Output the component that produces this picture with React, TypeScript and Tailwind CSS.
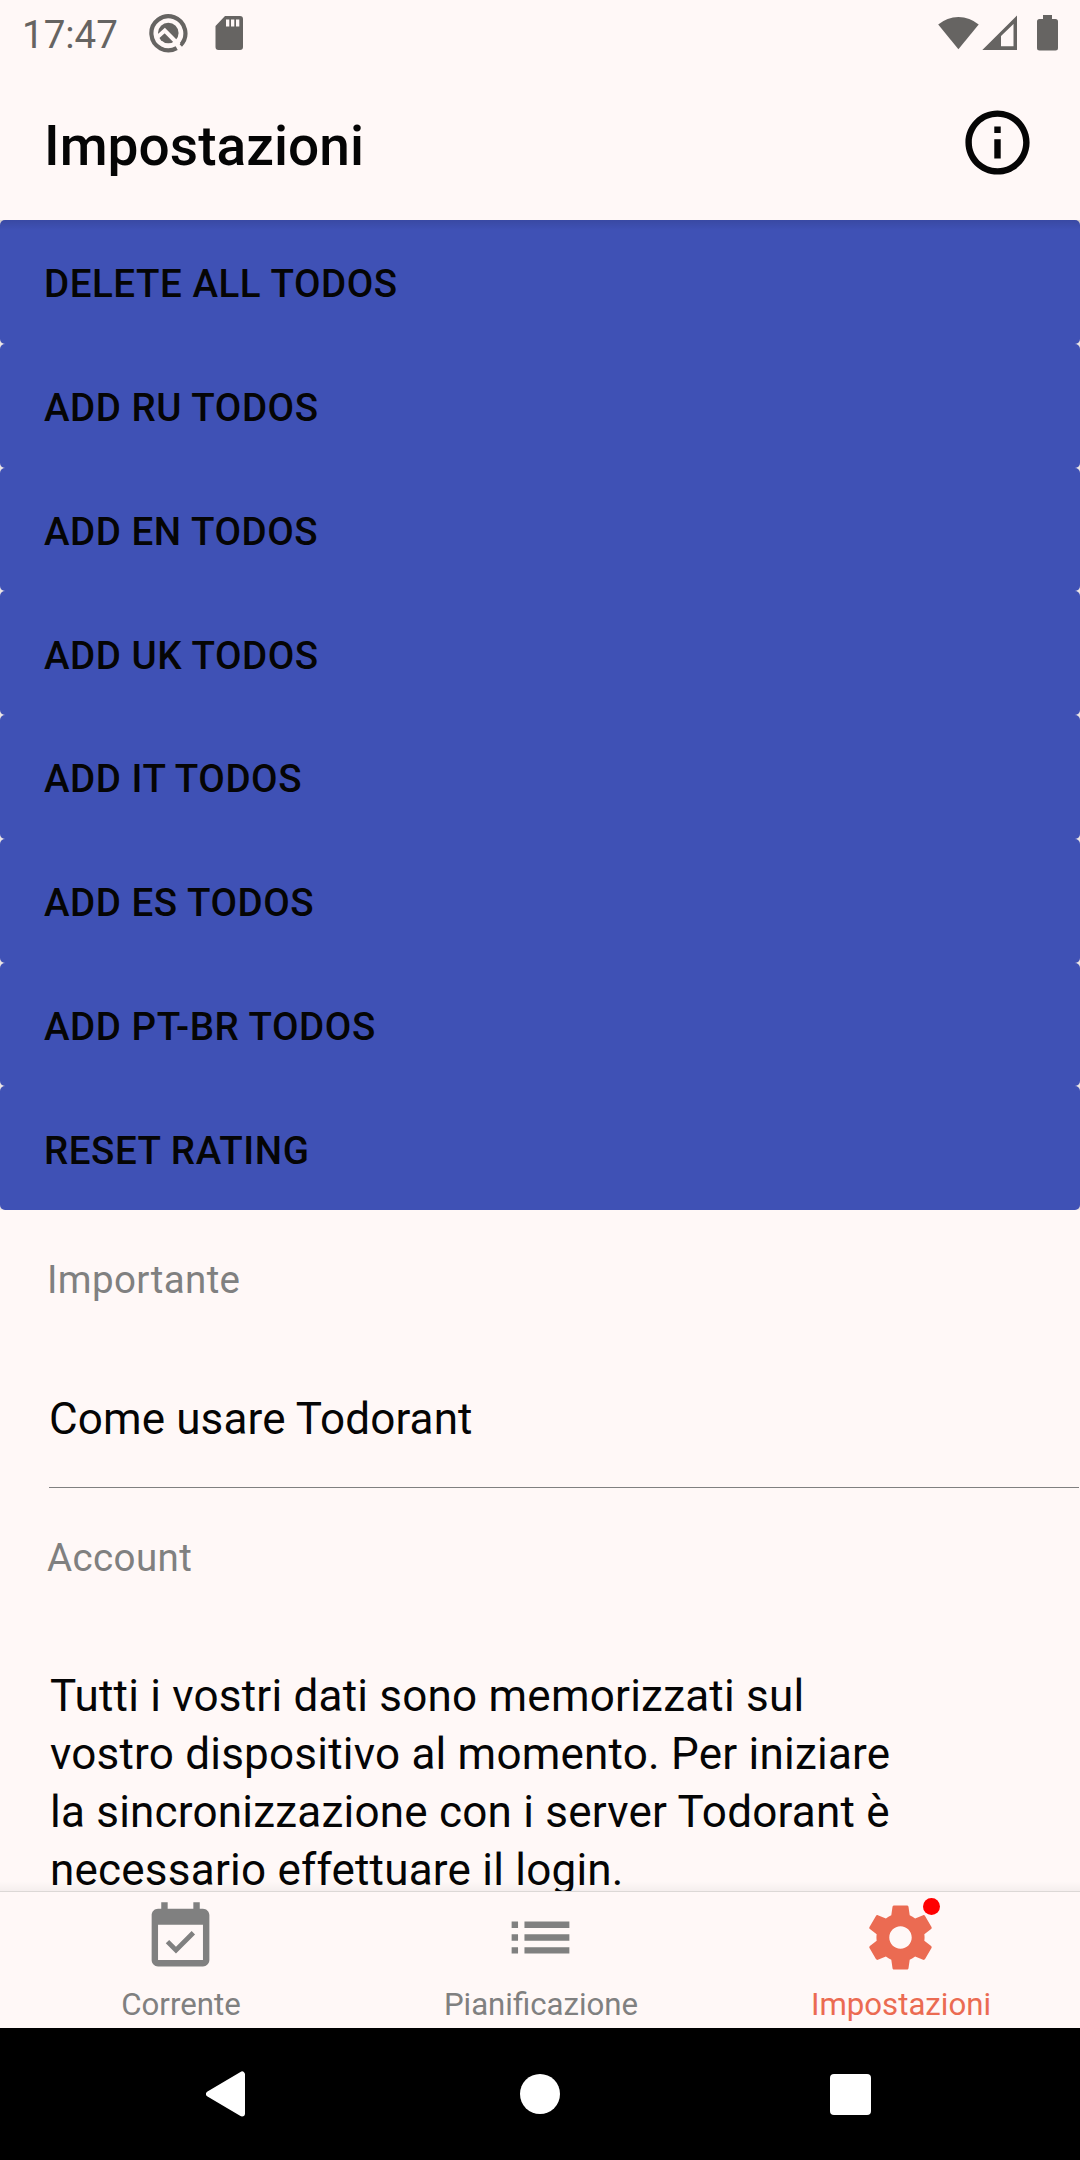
type NavTab = { label: string; path: string; active?: boolean };

const actions = [
  "DELETE ALL TODOS",
  "ADD RU TODOS",
  "ADD EN TODOS",
  "ADD UK TODOS",
  "ADD IT TODOS",
  "ADD ES TODOS",
  "ADD PT-BR TODOS",
  "RESET RATING",
];

const tabs: NavTab[] = [
  {
    label: "Corrente",
    path: "M16.53 11.06L15.47 10l-4.88 4.88-2.12-2.12-1.06 1.06L10.59 17l5.94-5.94zM19 3h-1V1h-2v2H8V1H6v2H5c-1.11 0-1.99.9-1.99 2L3 19c0 1.1.89 2 2 2h14c1.1 0 2-.9 2-2V5c0-1.1-.9-2-2-2zm0 16H5V8h14v11z",
  },
  {
    label: "Pianificazione",
    path: "M3 13h2v-2H3v2zm0 4h2v-2H3v2zm0-8h2V7H3v2zm4 4h14v-2H7v2zm0 4h14v-2H7v2zM7 7v2h14V7H7z",
  },
  {
    label: "Impostazioni",
    active: true,
    path: "M19.43 12.98c.04-.32.07-.64.07-.98s-.03-.66-.07-.98l2.11-1.65c.19-.15.24-.42.12-.64l-2-3.46c-.12-.22-.39-.3-.61-.22l-2.49 1c-.52-.4-1.08-.73-1.69-.98l-.38-2.65C14.46 2.18 14.25 2 14 2h-4c-.25 0-.46.18-.49.42l-.38 2.65c-.61.25-1.17.59-1.69.98l-2.49-1c-.23-.09-.49 0-.61.22l-2 3.46c-.13.22-.07.49.12.64l2.11 1.65c-.04.32-.07.65-.07.98s.03.66.07.98l-2.11 1.65c-.19.15-.24.42-.12.64l2 3.46c.12.22.39.3.61.22l2.49-1c.52.4 1.08.73 1.69.98l.38 2.65c.03.24.24.42.49.42h4c.25 0 .46-.18.49-.42l.38-2.65c.61-.25 1.17-.59 1.69-.98l2.49 1c.23.09.49 0 .61-.22l2-3.46c.12-.22.07-.49-.12-.64l-2.11-1.65zM12 15.5c-1.93 0-3.5-1.57-3.5-3.5s1.57-3.5 3.5-3.5 3.5 1.57 3.5 3.5-1.57 3.5-3.5 3.5z",
  },
];

function StatusBar() {
  return (
    <div className="flex h-[66px] shrink-0 items-center justify-between pl-[22px] pr-[21px] text-[#666462]">
      <div className="flex h-full items-center">
        <span className="w-[96px] pt-[4px] text-[38.5px] leading-[46px]">17:47</span>
        <svg className="ml-[30px] h-[40px] w-[40px]" viewBox="0 0 40 40">
          <path d="M32.5 32.2A17 17 0 1 0 28.7 35.1" fill="none" stroke="currentColor" strokeWidth="4.2" />
          <circle cx="20.3" cy="20" r="10.3" fill="currentColor" />
          <path d="M9 24.5L16.8 17.6L31 32" fill="none" stroke="#fff8f7" strokeWidth="4" />
        </svg>
        <svg className="ml-[27px] h-[36px] w-[28px]" viewBox="0 0 28 36">
          <path
            fillRule="evenodd"
            fill="currentColor"
            d="M10 1H25a3 3 0 0 1 3 3V32a3 3 0 0 1-3 3H3.5a3 3 0 0 1-3-3V11zM11 4.5V11.5H14.3V4.5zM16 4.5V11.5H19.3V4.5zM21 4.5V11.5H24.3V4.5z"
          />
        </svg>
      </div>
      <svg className="h-[66px] w-[121px]" viewBox="938 0 121 66" fill="currentColor">
        <path d="M958.4 49.2L938.2 24.6A31 31 0 0 1 978.7 24.6z" />
        <path fillRule="evenodd" d="M1017 15.5V50H982.3zM1013.5 24L1001 36V46.3H1013.5z" />
        <path d="M1043 15H1052V19H1055.5a2.5 2.5 0 0 1 2.5 2.5V48a2.5 2.5 0 0 1-2.5 2.5H1039.5a2.5 2.5 0 0 1-2.5-2.5V21.5a2.5 2.5 0 0 1 2.5-2.5H1043z" />
      </svg>
    </div>
  );
}

function Header() {
  return (
    <header className="flex h-[154px] shrink-0 items-center justify-between px-[44px] text-[#050505]">
      <h1 className="pt-[6px] text-[55px] leading-[64px] font-medium tracking-[0.06px]">Impostazioni</h1>
      <svg className="mb-[1px] h-[77px] w-[77px]" viewBox="0 0 24 24" fill="currentColor">
        <path d="M11 17h2v-6h-2v6zm1-15C6.48 2 2 6.48 2 12s4.48 10 10 10 10-4.48 10-10S17.52 2 12 2zm0 18c-4.41 0-8-3.59-8-8s3.59-8 8-8 8 3.59 8 8-3.59 8-8 8zM11 9h2V7h-2v2z" />
      </svg>
    </header>
  );
}

function SectionLabel({ children }: { children: string }) {
  return (
    <h2 className="pt-[45px] pl-[47px] text-[38.5px] leading-[50px] tracking-[0.38px] text-[#808080]">{children}</h2>
  );
}

function BottomTab({ label, path, active }: NavTab) {
  return (
    <div className={active ? "flex flex-1 flex-col items-center text-[#eb6b52]" : "flex flex-1 flex-col items-center text-[#808080]"}>
      <div className="relative mt-[7px] h-[77px] w-[77px]">
        <svg className="h-full w-full" viewBox="0 0 24 24" fill="currentColor">
          <path d={path} />
        </svg>
        {active && <span className="absolute -top-px right-[-1px] h-[17px] w-[17px] rounded-full bg-[#ff0000]" />}
      </div>
      <span className="mt-[11px] pl-[2px] text-[31.2px] leading-[36px]">{label}</span>
    </div>
  );
}

export default function App() {
  return (
    <div className="flex h-[2160px] w-[1080px] flex-col overflow-hidden bg-[#fff8f7] font-[Roboto,sans-serif]">
      <StatusBar />
      <Header />
      <main className="relative min-h-0 flex-1 overflow-hidden text-[#050505]">
        <div className="bg-[#ebe4e4]">
          {actions.map((label) => (
            <button
              key={label}
              className="flex h-[123.75px] w-full items-center rounded-[5px] bg-[#3f51b5] pt-[5px] pl-[44px] text-[38.5px] leading-[46px] font-medium tracking-[0.55px] text-[#050505]"
            >
              {label}
            </button>
          ))}
        </div>
        <SectionLabel>Importante</SectionLabel>
        <div className="mt-[85px] mr-px ml-[49px] border-b border-[#808080] pb-[39px] text-[44px] leading-[58px] tracking-[0.13px]">
          Come usare Todorant
        </div>
        <SectionLabel>Account</SectionLabel>
        <p className="mt-[84px] ml-[50px] text-[44px] leading-[58px] tracking-[0.22px]">
          Tutti i vostri dati sono memorizzati sul
          <br />
          vostro dispositivo al momento. Per iniziare
          <br />
          la sincronizzazione con i server Todorant è
          <br />
          necessario effettuare il login.
        </p>
        <div className="absolute inset-x-0 top-0 h-[10px] bg-linear-to-b from-black/10 to-transparent" />
        <div className="absolute inset-x-0 bottom-0 h-[10px] bg-linear-to-t from-black/4 to-transparent" />
      </main>
      <nav className="flex h-[137px] shrink-0 border-t border-[#dcd8d6]">
        {tabs.map((tab) => (
          <BottomTab key={tab.label} {...tab} />
        ))}
      </nav>
      <div className="flex h-[132px] shrink-0 items-center bg-black pl-[206px]">
        <svg className="h-[46px] w-[39px]" viewBox="0 0 39 46">
          <path d="M3 23L36 3.5V42.5z" fill="white" stroke="white" strokeWidth="6" strokeLinejoin="round" />
        </svg>
        <span className="ml-[275px] h-[40px] w-[40px] rounded-full bg-white" />
        <span className="ml-[270px] h-[41px] w-[41px] rounded-[4px] bg-white" />
      </div>
    </div>
  );
}
